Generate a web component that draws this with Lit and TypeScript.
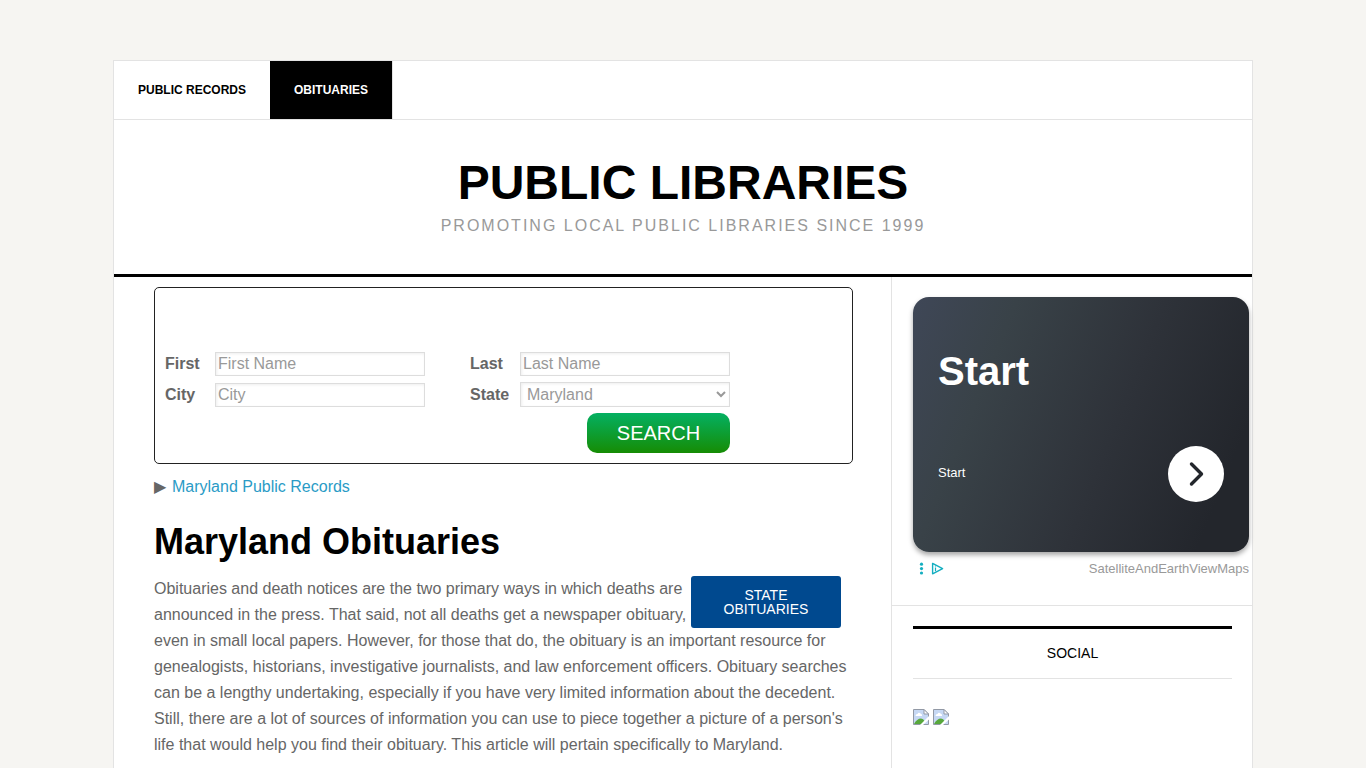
import { LitElement, html, css } from "lit";
import { customElement } from "lit/decorators.js";

const STATES = ["Alabama", "Delaware", "Maryland", "Virginia", "Washington"];

@customElement("search-form")
class SearchForm extends LitElement {
  static styles = css`
    :host { display: block; }
    .form {
      box-sizing: border-box;
      border: 1px solid #222;
      border-radius: 5px;
      padding: 64px 10px 10px;
      display: grid;
      grid-template-columns: 50px 210px 45px 50px 210px;
      grid-template-rows: 24px 25px 40px;
      row-gap: 6px;
      align-items: end;
    }
    label { font-weight: 700; line-height: 24px; }
    .second { grid-column: 4; }
    .field {
      box-sizing: border-box;
      width: 100%;
      height: 24px;
      margin: 0;
      padding: 1px 2px;
      border: 1px solid #ddd;
      border-radius: 0;
      background: #fff;
      box-shadow: 1px 1px 3px #eee inset;
      color: #999;
      font: 16px "Liberation Sans", Arial, sans-serif;
    }
    .field::placeholder { color: #999; opacity: 1; }
    .select { height: 25px; }
    .search {
      grid-column: 5;
      justify-self: end;
      width: 143px;
      height: 40px;
      padding: 0;
      border: 0;
      border-radius: 10px;
      background: linear-gradient(#04b062, #168c04);
      color: #fff;
      font: 20px "Liberation Sans", Arial, sans-serif;
      cursor: pointer;
    }
  `;
  render() {
    return html`
      <form class="form" @submit=${(e: Event) => e.preventDefault()}>
        <label for="first">First</label>
        <input class="field" id="first" type="text" placeholder="First Name" />
        <label class="second" for="last">Last</label>
        <input class="field" id="last" type="text" placeholder="Last Name" />
        <label for="city">City</label>
        <input class="field" id="city" type="text" placeholder="City" />
        <label class="second" for="state">State</label>
        <select class="field select" id="state">
          ${STATES.map((s) => html`<option ?selected=${s === "Maryland"}>${s}</option>`)}
        </select>
        <button class="search" type="submit">SEARCH</button>
      </form>
    `;
  }
}

@customElement("ad-card")
class AdCard extends LitElement {
  static styles = css`
    :host { display: block; height: 308px; }
    .card {
      box-sizing: border-box;
      height: 255px;
      padding: 50px 25px;
      border-radius: 16px;
      background: linear-gradient(112deg, #3f4757 0%, #394248 24%, #2e3239 58%, #23262c 88%, #23262c 100%);
      box-shadow: 0 3px 5px rgba(0, 0, 0, 0.35);
      color: #fff;
      display: flex;
      flex-direction: column;
      justify-content: space-between;
    }
    .title { font-size: 40px; line-height: 48px; font-weight: 700; }
    .row { display: flex; align-items: center; justify-content: space-between; }
    .small { font-size: 13px; line-height: 20px; padding-bottom: 2px; }
    .go {
      width: 56px;
      height: 56px;
      padding: 0;
      border: 0;
      border-radius: 50%;
      background: #fff;
      display: grid;
      place-items: center;
      cursor: pointer;
    }
    .foot {
      display: flex;
      align-items: center;
      justify-content: space-between;
      height: 20px;
      padding: 7px 0 0 5px;
      color: #999;
      font-size: 13px;
    }
    svg { display: block; }
  `;
  render() {
    return html`
      <div class="card">
        <div class="title">Start</div>
        <div class="row">
          <span class="small">Start</span>
          <button class="go" aria-label="Open">
            <svg width="56" height="56" viewBox="0 0 56 56" fill="none" stroke="#23262c" stroke-width="3.4" stroke-linecap="round" stroke-linejoin="round">
              <path d="M23.5 18 L33.5 28 L23.5 38" />
            </svg>
          </button>
        </div>
      </div>
      <div class="foot">
        <svg width="28" height="16" viewBox="0 0 28 16">
          <g fill="#14aec0">
            <circle cx="3.5" cy="3.2" r="1.6" /><circle cx="3.5" cy="7.6" r="1.6" /><circle cx="3.5" cy="12" r="1.6" />
          </g>
          <path d="M14.6 2.4 V12.8 L24.6 7.6 Z" fill="none" stroke="#14aec0" stroke-width="1.4" stroke-linejoin="round" />
          <path d="M17.5 6.6 V10.2 M17.5 4.6 V5.6" fill="none" stroke="#14aec0" stroke-width="1.2" />
        </svg>
        <span>SatelliteAndEarthViewMaps</span>
      </div>
    `;
  }
}

@customElement("app-root")
class AppRoot extends LitElement {
  static styles = css`
    :host {
      display: flex;
      flex-direction: column;
      box-sizing: border-box;
      min-height: 100vh;
      padding-top: 60px;
      background: #f6f5f2;
      color: #666;
      font: 16px/26px "Liberation Sans", Arial, sans-serif;
    }
    .page {
      flex: 1;
      display: flex;
      flex-direction: column;
      box-sizing: border-box;
      width: 100%;
      max-width: 1140px;
      margin: 0 auto;
      background: #fff;
      border: 1px solid #e3e3e3;
      border-bottom: 0;
    }
    .nav { display: flex; border-bottom: 1px solid #e3e3e3; }
    .tab {
      padding: 16px 24px;
      color: #000;
      font-size: 12px;
      line-height: 26px;
      font-weight: 700;
      text-decoration: none;
    }
    .tab.current { background: #000; color: #fff; border-right: 1px solid #e3e3e3; }
    .masthead {
      padding: 39px 0 35px;
      text-align: center;
      border-bottom: 3px solid #000;
    }
    .site { color: #000; font-size: 48px; line-height: 48px; font-weight: 700; }
    .tagline { color: #999; letter-spacing: 2px; line-height: 26px; margin: 6px 0 0; }
    .columns { flex: 1; display: flex; }
    .main { flex: 1; min-width: 0; padding: 10px 38px 10px 40px; }
    .crumb { display: flex; gap: 6px; margin: 10px 0 20px; }
    a { color: #2a9bc6; text-decoration: none; }
    h1 { margin: 0 0 13px; color: #000; font-size: 36px; line-height: 43px; }
    p { margin: 0; }
    .state-link {
      float: right;
      box-sizing: border-box;
      width: 150px;
      margin-right: 12px;
      padding: 12px 20px;
      border-radius: 3px;
      background: #00498f;
      color: #fff;
      font-size: 14px;
      line-height: 14px;
      text-align: center;
    }
    .side { flex: 0 0 360px; border-left: 1px solid #e3e3e3; }
    .ad { padding: 20px 3px 0 21px; border-bottom: 1px solid #e3e3e3; }
    .widget { padding: 20px 20px 20px 21px; }
    h2 {
      margin: 0 0 30px;
      padding: 12px 0;
      border-top: 3px solid #000;
      border-bottom: 1px solid #e3e3e3;
      color: #000;
      font-size: 14px;
      line-height: 25px;
      font-weight: 400;
      text-align: center;
    }
    .icons { display: flex; gap: 4px; }
    .icons svg { display: block; }
  `;

  private missing(label: string) {
    return html`<a href="#" aria-label=${label}>
      <svg width="16" height="16" viewBox="0 0 16 16">
        <path d="M0.5 0.5 H11 L15.5 5 V15.5 H0.5 Z" fill="#c6d8f4" />
        <path d="M2.5 7 Q2.5 5 4.5 5 Q5.5 3 7.5 4.5 Q9.5 5 9 7 Z" fill="#fff" />
        <path d="M1 15 Q4 9.5 8 9.5 Q10.5 9.5 11.5 12 L9 15 Z" fill="#58a83c" />
        <path d="M0.5 15.5 V0.5 H11 L15.5 5 V15.5 Z" fill="none" stroke="#9299a5" />
        <path d="M11 0.5 V5 H15.5 Z" fill="#fff" stroke="#9299a5" />
        <path d="M16 7 V10.5 L10 16 H7 Z" fill="#fff" />
      </svg>
    </a>`;
  }

  render() {
    return html`
      <div class="page">
        <nav class="nav">
          <a class="tab" href="#">PUBLIC RECORDS</a>
          <a class="tab current" href="#">OBITUARIES</a>
        </nav>
        <header class="masthead">
          <div class="site">PUBLIC LIBRARIES</div>
          <p class="tagline">PROMOTING LOCAL PUBLIC LIBRARIES SINCE 1999</p>
        </header>
        <div class="columns">
          <main class="main">
            <search-form></search-form>
            <div class="crumb"><span>▶</span><a href="#">Maryland Public Records</a></div>
            <h1>Maryland Obituaries</h1>
            <a class="state-link" href="#">STATE OBITUARIES</a>
            <p>
              Obituaries and death notices are the two primary ways in which deaths are announced in
              the press. That said, not all deaths get a newspaper obituary, even in small local
              papers. However, for those that do, the obituary is an important resource for
              genealogists, historians, investigative journalists, and law enforcement officers.
              Obituary searches can be a lengthy undertaking, especially if you have very limited
              information about the decedent. Still, there are a lot of sources of information you
              can use to piece together a picture of a person's life that would help you find their
              obituary. This article will pertain specifically to Maryland.
            </p>
          </main>
          <aside class="side">
            <div class="ad"><ad-card></ad-card></div>
            <section class="widget">
              <h2>SOCIAL</h2>
              <div class="icons">${this.missing("Facebook")}${this.missing("Twitter")}</div>
            </section>
          </aside>
        </div>
      </div>
    `;
  }
}
